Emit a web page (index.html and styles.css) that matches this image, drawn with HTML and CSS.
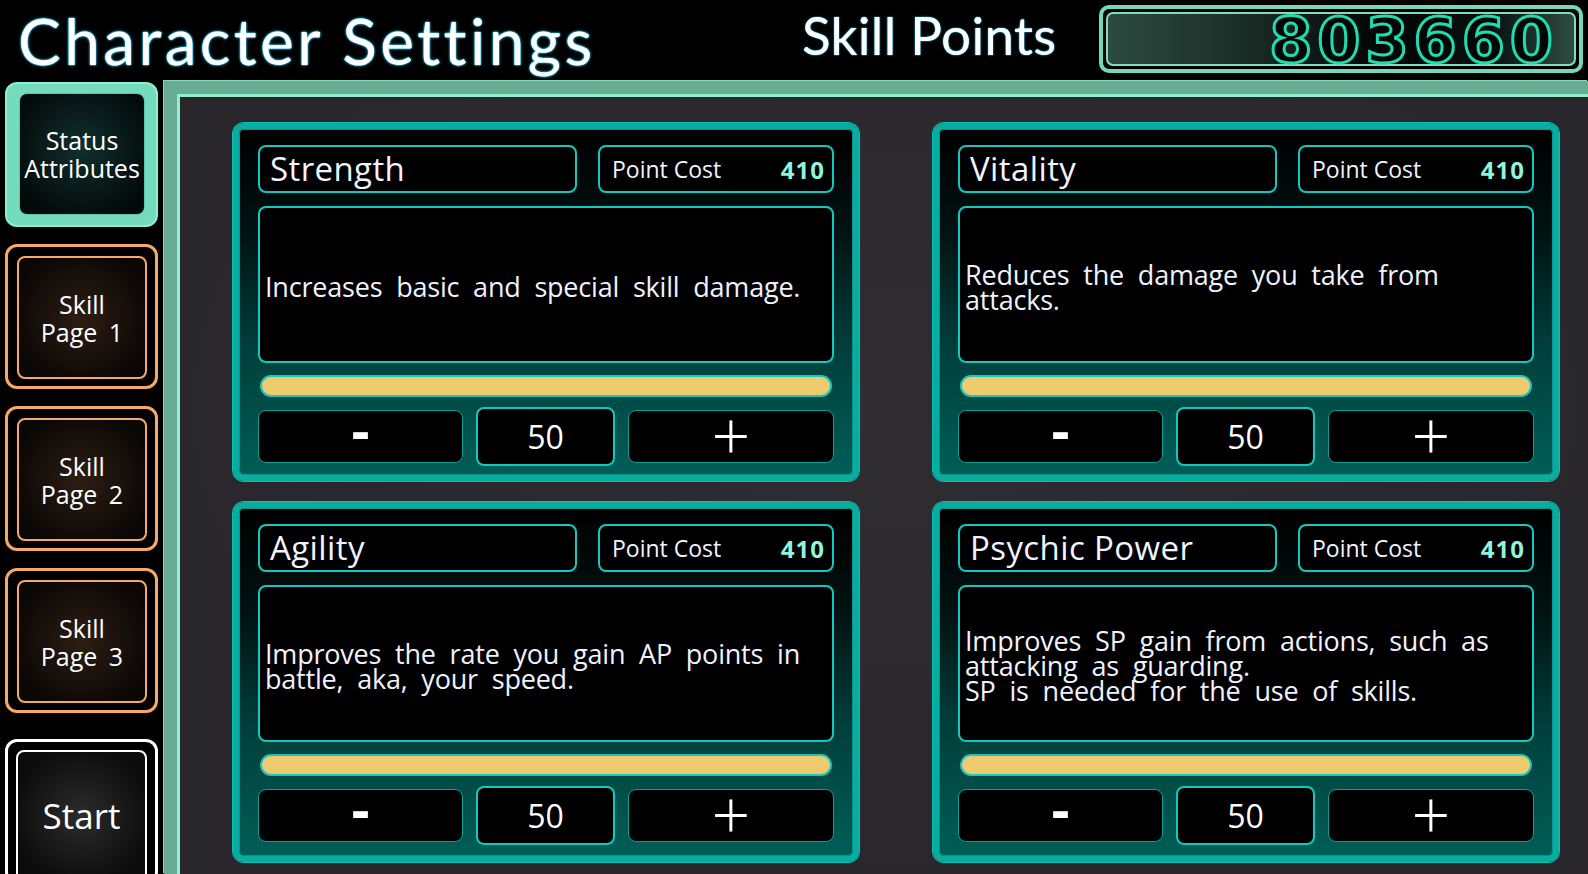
FILE: index.html
```html
<!DOCTYPE html>
<html lang="en">
<head>
    <meta charset="UTF-8">
    <meta name="viewport" content="width=device-width, initial-scale=1.0">
    <title>Character Settings</title>
    <link rel="stylesheet" href="styles.css">
</head>
<body>
    <div class="screen">
        <header class="header">
            <h1 class="title">Character Settings</h1>
            <div class="sp-label">Skill Points</div>
            <div class="sp-box">
                <div class="sp-inner">803660</div>
            </div>
        </header>

        <div class="main">
            <nav class="sidebar">
                <button class="nav-btn nav-status"><span class="nav-face">Status<br>Attributes</span></button>
                <button class="nav-btn nav-skill"><span class="nav-face">Skill<br>Page 1</span></button>
                <button class="nav-btn nav-skill"><span class="nav-face">Skill<br>Page 2</span></button>
                <button class="nav-btn nav-skill"><span class="nav-face">Skill<br>Page 3</span></button>
                <button class="nav-btn nav-start"><span class="nav-face">Start</span></button>
            </nav>

            <section class="panel">
                <div class="panel-inner">
                    <div class="cards">
                        <div class="card">
                            <div class="card-head">
                                <div class="stat-name">Strength</div>
                                <div class="stat-cost"><span>Point Cost</span><b>410</b></div>
                            </div>
                            <div class="stat-desc"><p>Increases basic and special skill damage.</p></div>
                            <div class="stat-bar"></div>
                            <div class="stat-controls">
                                <button class="ctl ctl-minus">-</button>
                                <div class="ctl-value">50</div>
                                <button class="ctl ctl-plus">+</button>
                            </div>
                        </div>

                        <div class="card">
                            <div class="card-head">
                                <div class="stat-name">Vitality</div>
                                <div class="stat-cost"><span>Point Cost</span><b>410</b></div>
                            </div>
                            <div class="stat-desc"><p>Reduces the damage you take from<br>attacks.</p></div>
                            <div class="stat-bar"></div>
                            <div class="stat-controls">
                                <button class="ctl ctl-minus">-</button>
                                <div class="ctl-value">50</div>
                                <button class="ctl ctl-plus">+</button>
                            </div>
                        </div>

                        <div class="card">
                            <div class="card-head">
                                <div class="stat-name">Agility</div>
                                <div class="stat-cost"><span>Point Cost</span><b>410</b></div>
                            </div>
                            <div class="stat-desc"><p>Improves the rate you gain AP points in<br>battle, aka, your speed.</p></div>
                            <div class="stat-bar"></div>
                            <div class="stat-controls">
                                <button class="ctl ctl-minus">-</button>
                                <div class="ctl-value">50</div>
                                <button class="ctl ctl-plus">+</button>
                            </div>
                        </div>

                        <div class="card">
                            <div class="card-head">
                                <div class="stat-name">Psychic Power</div>
                                <div class="stat-cost"><span>Point Cost</span><b>410</b></div>
                            </div>
                            <div class="stat-desc"><p>Improves SP gain from actions, such as<br>attacking as guarding.<br>SP is needed for the use of skills.</p></div>
                            <div class="stat-bar"></div>
                            <div class="stat-controls">
                                <button class="ctl ctl-minus">-</button>
                                <div class="ctl-value">50</div>
                                <button class="ctl ctl-plus">+</button>
                            </div>
                        </div>
                    </div>
                </div>
            </section>
        </div>
    </div>
</body>
</html>
```

FILE: styles.css
```css
* {
    box-sizing: border-box;
}
body {
    margin: 0;
    background: #000;
    font-family: 'Open Sans', 'Liberation Sans', sans-serif;
    color: #ffffff;
    overflow: hidden;
}
.screen {
    width: 1588px;
    height: 874px;
    display: flex;
    flex-direction: column;
    overflow: hidden;
}

/* header */
.header {
    height: 81px;
    flex-shrink: 0;
    display: grid;
    grid-template-columns: 784px 297px 484px;
    padding-left: 18px;
}
.title {
    margin: 0;
    font-family: 'Lato', 'Noto Sans', sans-serif;
    font-weight: 400;
    font-size: 64px;
    line-height: 81px;
    letter-spacing: 3.4px;
    color: #ffffff;
    text-shadow: 0 0 1px #2ecff5, 0 0 2px #2ecff5, 0 0 3px #1ab8ea;
}
.sp-label {
    font-family: 'Lato', 'Noto Sans', sans-serif;
    font-size: 53px;
    line-height: 70px;
    letter-spacing: 0.3px;
    color: #ffffff;
    text-shadow: 0 0 1px #2ecff5, 0 0 2px #1ab8ea;
}
.sp-box {
    margin-top: 5px;
    height: 68px;
    border: 4px solid #76d6ba;
    border-radius: 10px;
    background: #000;
    padding: 3px;
}
.sp-inner {
    height: 100%;
    border: 2px solid #7fdcc0;
    border-radius: 7px;
    background: linear-gradient(90deg, #2c4a3f 0%, #1b2c26 30%, #020504 58%, #08110e 82%, #2e4c42 100%);
    text-align: right;
    padding-right: 16px;
    font-family: 'DejaVu Sans', 'Noto Sans', sans-serif;
    font-weight: 700;
    font-size: 62px;
    line-height: 54px;
    letter-spacing: 5px;
    color: #020605;
    -webkit-text-stroke: 3px #1fdcb0;
}

/* layout */
.main {
    flex: 1;
    display: flex;
    min-height: 0;
}
.sidebar {
    width: 164px;
    flex-shrink: 0;
    padding: 1px 0 0 5px;
    display: flex;
    flex-direction: column;
    gap: 17px;
}

/* left menu */
.nav-btn {
    width: 153px;
    height: 145px;
    flex-shrink: 0;
    border-radius: 12px;
    background: #000;
    font-family: 'Open Sans', 'Liberation Sans', sans-serif;
    font-size: 25px;
    line-height: 28px;
    color: #ffffff;
    word-spacing: 5px;
    cursor: pointer;
}
.nav-face {
    display: flex;
    align-items: center;
    justify-content: center;
    height: 100%;
    border-radius: 8px;
}
.nav-status {
    background: #74dcbd;
    border: 2px solid #8cf0d2;
    padding: 9px 11px 10px 12px;
}
.nav-status .nav-face {
    background: radial-gradient(circle at 50% 45%, #10302e, #030a0a 80%);
    border: 1px solid #5cc4a8;
    word-spacing: 0;
}
.nav-skill {
    border: 3px solid #f6a866;
    padding: 9px 8px 7px 9px;
}
.nav-skill .nav-face {
    border: 2px solid #f6a866;
    background: radial-gradient(circle at 50% 50%, #2d1e13, #0b0705 80%);
}
.nav-start {
    margin-top: 9px;
    border: 3px solid #ffffff;
    padding: 8px 8px 0 8px;
    font-size: 35px;
}
.nav-start .nav-face {
    border: 2px solid #ffffff;
    background: radial-gradient(circle at 50% 50%, #2c2c2c, #0b0b0b 80%);
}

/* main panel */
.panel {
    flex: 1;
    border-top: 13px solid #66ad93;
    border-left: 13px solid #66ad93;
    box-shadow: -1px -1px 0 #86d8b8;
}
.panel-inner {
    height: 100%;
    border-top: 3px solid #8ef0cc;
    border-left: 3px solid #8ef0cc;
    background: radial-gradient(ellipse at 50% 40%, #2f2d31, #29272b 70%);
    padding: 26px 0 0 53px;
}
.cards {
    display: grid;
    grid-template-columns: 626px 626px;
    grid-template-rows: 358px 360px;
    column-gap: 74px;
    row-gap: 21px;
}

/* stat card */
.card {
    border: 6px solid #07ad9f;
    border-radius: 11px;
    box-shadow: inset 0 0 0 1px #0d9188, 0 0 0 1px #0bc0b2;
    background: linear-gradient(180deg, #000 0%, #011212 30%, #003e3a 62%, #005e57 100%);
    padding: 16px 19px 0 19px;
}
.card-head {
    display: grid;
    grid-template-columns: 319px 1fr;
    column-gap: 21px;
    height: 48px;
}
.stat-name,
.stat-cost,
.stat-desc,
.ctl,
.ctl-value {
    background: #000;
    border: 2px solid #12c9bf;
    border-radius: 8px;
}
.stat-name {
    font-size: 33px;
    line-height: 44px;
    padding-left: 10px;
    color: #f2f3ff;
    letter-spacing: 0.4px;
}
.stat-cost {
    display: flex;
    align-items: center;
    justify-content: space-between;
    padding: 0 7px 0 12px;
    font-size: 23px;
    color: #f2f3ff;
}
.stat-cost b {
    font-weight: 700;
    font-size: 24px;
    color: #8ef5dc;
    letter-spacing: 1px;
}
.stat-desc {
    margin-top: 13px;
    height: 157px;
    display: flex;
    align-items: center;
    padding: 4px 0 0 5px;
}
.stat-desc p {
    margin: 0;
    font-size: 27px;
    line-height: 25px;
    color: #f0f2ff;
    word-spacing: 7px;
    letter-spacing: -0.2px;
}
.stat-bar {
    margin: 12px 2px 0 2px;
    height: 22px;
    background: #eecb6e;
    border: 2px solid #1dc6bc;
    border-radius: 12px;
}
.stat-controls {
    margin-top: 10px;
    display: grid;
    grid-template-columns: 205px 139px 1fr;
    column-gap: 13px;
    align-items: center;
    height: 59px;
}
.ctl {
    height: 53px;
    border: 1.5px solid #0b9e96;
    color: #ffffff;
    font-family: 'Open Sans', 'Liberation Sans', sans-serif;
    cursor: pointer;
    padding: 0;
    display: flex;
    align-items: center;
    justify-content: center;
}
.ctl-minus {
    font-size: 56px;
    font-weight: 700;
    line-height: 30px;
    padding-bottom: 15px;
}
.ctl-plus {
    font-size: 68px;
    font-weight: 300;
    line-height: 40px;
    padding-bottom: 4px;
}
.ctl-value {
    height: 59px;
    text-align: center;
    font-size: 32px;
    line-height: 55px;
    color: #ffffff;
}
```
